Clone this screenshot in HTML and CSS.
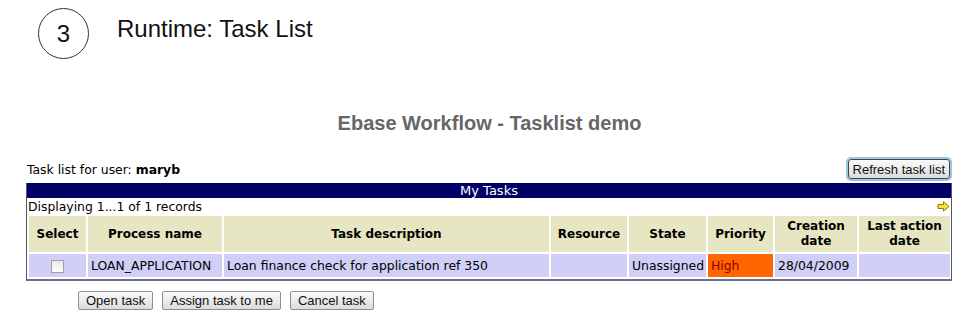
FILE: index.html
```html
<!DOCTYPE html>
<html lang="en">
<head>
<meta charset="UTF-8">
<title>Runtime: Task List</title>
<link rel="stylesheet" href="styles.css">
</head>
<body>
<div class="slide-head">
    <div class="step">3</div>
    <div class="slide-title">Runtime: Task List</div>
</div>

<h2 class="app-title">Ebase Workflow - Tasklist demo</h2>

<div class="tasks">
    <div class="user-row">
        <span>Task list for user: <b>maryb</b></span>
        <button class="btn refresh">Refresh task list</button>
    </div>

    <div class="grid">
        <div class="grid-title">My Tasks</div>
        <div class="grid-info">
            <span>Displaying 1...1 of 1 records</span>
            <svg class="next" width="13" height="11" viewBox="0 0 13 11">
                <path d="M1 3.5 H6.5 V0.8 L12 5.5 L6.5 10.2 V7.5 H1 Z" fill="#ffe033" stroke="#8a7a10" stroke-width="1"/>
            </svg>
        </div>
        <table class="results">
            <tr>
                <th class="c-sel">Select</th>
                <th class="c-proc">Process name</th>
                <th class="c-desc">Task description</th>
                <th class="c-res">Resource</th>
                <th class="c-state">State</th>
                <th class="c-prio">Priority</th>
                <th class="c-cre">Creation date</th>
                <th class="c-last">Last action date</th>
            </tr>
            <tr>
                <td class="center"><span class="check"></span></td>
                <td>LOAN_APPLICATION</td>
                <td>Loan finance check for application ref 350</td>
                <td></td>
                <td>Unassigned</td>
                <td class="high">High</td>
                <td>28/04/2009</td>
                <td></td>
            </tr>
        </table>
    </div>

    <div class="actions">
        <button class="btn">Open task</button>
        <button class="btn">Assign task to me</button>
        <button class="btn">Cancel task</button>
    </div>
</div>
</body>
</html>
```

FILE: styles.css
```css
/* Task list page */
body {
    margin: 0;
    background-color: #ffffff;
    font-family: "DejaVu Sans", Verdana, sans-serif;
    font-size: 12.4px;
    color: #000000;
}
.slide-head {
    display: flex;
    align-items: center;
    padding: 8px 0 0 38px;
    gap: 28px;
}
.step {
    width: 49px;
    height: 49px;
    border: 1px solid #333333;
    border-radius: 50%;
    display: flex;
    align-items: center;
    justify-content: center;
    font-family: "Liberation Sans", Arial, sans-serif;
    font-size: 24px;
    color: #111111;
}
.slide-title {
    font-family: "Liberation Sans", Arial, sans-serif;
    font-size: 24px;
    color: #111111;
    margin-top: -9px;
}
.app-title {
    margin: 53px 0 0 0;
    text-align: center;
    font-family: "Liberation Sans", Arial, sans-serif;
    font-size: 20px;
    font-weight: bold;
    color: #666666;
    padding-left: 6px;
}
.tasks {
    padding: 0 21px 0 26px;
}
.user-row {
    display: flex;
    justify-content: space-between;
    align-items: flex-end;
    margin-top: 24px;
    height: 24px;
    padding-left: 1px;
}
.user-row span {
    margin-bottom: 6px;
}
.btn {
    font-family: "Liberation Sans", Arial, sans-serif;
    font-size: 13px;
    color: #111111;
    background: linear-gradient(#fafafa, #dcdcdc);
    border: 1px solid #8e8e8e;
    border-radius: 2px;
    padding: 0 7px;
    height: 19px;
}
.refresh {
    height: 20px;
    padding: 0 4px;
    border: 1px solid #444444;
    box-shadow: 0 0 0 2px #9cc7e4;
    border-radius: 3px;
    margin-right: 2px;
    margin-bottom: 4px;
}
.grid {
    border: 1px solid #55556a;
    border-bottom: 2px solid #6f6f8c;
    border-top: none;
}
.grid-title {
    background-color: #000066;
    color: #ffffff;
    text-align: center;
    font-size: 13px;
    height: 15px;
    line-height: 15px;
}
.grid-info {
    display: flex;
    justify-content: space-between;
    align-items: center;
    height: 17px;
    padding: 0 0 0 1px;
}
.next {
    margin-right: 1px;
}
.results {
    width: 100%;
    table-layout: fixed;
    border-collapse: separate;
    border-spacing: 2px;
    margin-top: -1px;
}
.results th {
    background-color: #e6e6c2;
    font-weight: bold;
    font-size: 12px;
    height: 36px;
    padding: 0 2px;
    line-height: 15px;
}
.results td {
    background-color: #cfcff7;
    height: 23px;
    padding: 0 3px;
    white-space: nowrap;
}
.results .center {
    text-align: center;
}
.results td.high {
    background-color: #ff6600;
    color: #8b0000;
}
.c-sel { width: 53px; }
.c-proc { width: 130px; }
.c-desc { width: 321px; }
.c-res { width: 72px; }
.c-state { width: 73px; }
.c-prio { width: 61px; }
.c-cre { width: 78px; }
.c-last { width: 87px; }
.check {
    display: inline-block;
    width: 11px;
    height: 11px;
    border: 1px solid #a0a0a0;
    background: linear-gradient(#e8e8e8, #ffffff);
    vertical-align: middle;
}
.actions {
    display: flex;
    gap: 9px;
    padding: 10px 0 0 52px;
}
```
